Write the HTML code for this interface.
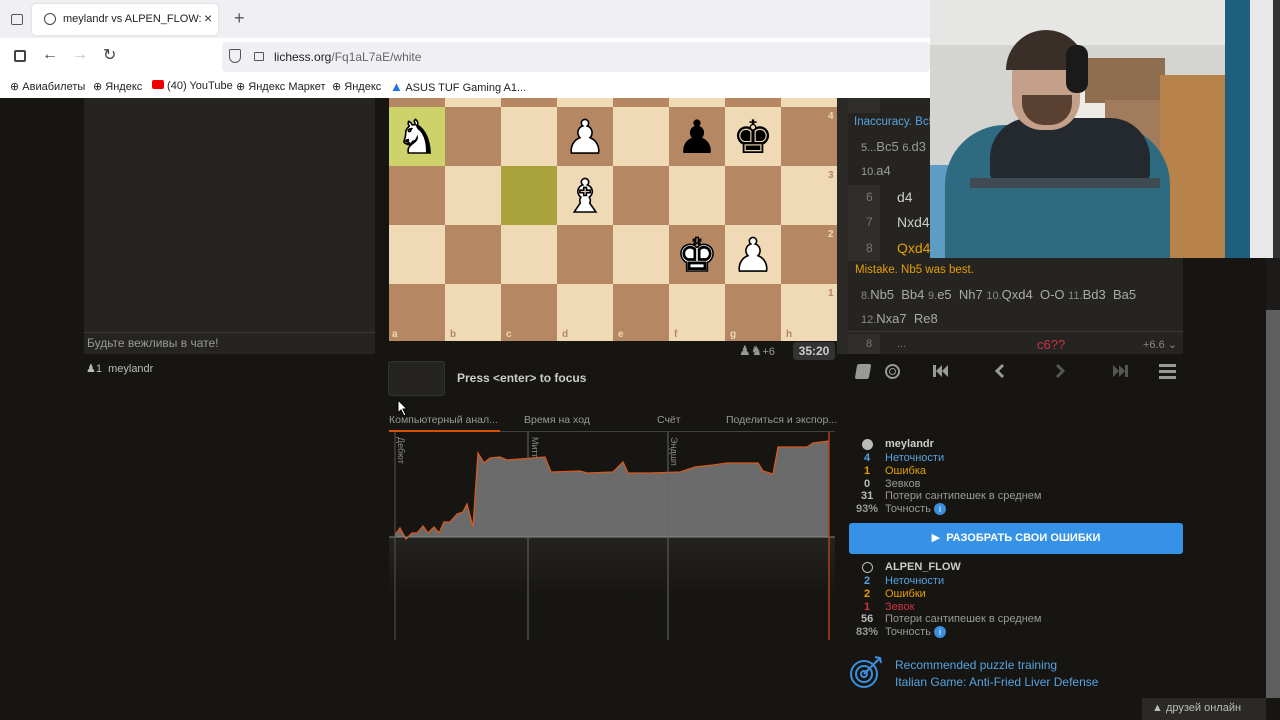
<!DOCTYPE html>
<html><head><meta charset="utf-8">
<style>
*{margin:0;padding:0;box-sizing:border-box}
body{width:1280px;height:720px;overflow:hidden;background:#161512;font-family:"Liberation Sans","DejaVu Sans",sans-serif;position:relative;color:#bababa}
.a{position:absolute;white-space:nowrap}
.mv{font-size:13px}
</style></head><body>
<!-- browser chrome -->
<div class="a" style="left:0;top:0;width:1280px;height:38px;background:#f0f0f4"></div>
<div class="a" style="left:32px;top:4px;width:186px;height:31px;background:#fff;border-radius:4px;box-shadow:0 0 2px #ccc"></div>
<div class="a" style="left:11px;top:14px;width:12px;height:11px;border:1.5px solid #555;border-radius:2px"></div>
<div class="a" style="left:44px;top:13px;width:12px;height:12px;border:1.5px solid #444;border-radius:50%"></div>
<div class="a" style="left:63px;top:13px;width:138px;overflow:hidden;font-size:11px;color:#222">meylandr vs ALPEN_FLOW: Itali</div>
<div class="a" style="left:204px;top:10px;font-size:14px;color:#333">×</div>
<div class="a" style="left:234px;top:8px;font-size:18px;color:#555">+</div>
<div class="a" style="left:0;top:38px;width:1280px;height:37px;background:#fff"></div>
<div class="a" style="left:14px;top:50px;width:12px;height:12px;border:2px solid #444;border-radius:2px"></div>
<div class="a" style="left:42px;top:46px;font-size:16px;color:#444">←</div>
<div class="a" style="left:72px;top:46px;font-size:16px;color:#bbb">→</div>
<div class="a" style="left:103px;top:45px;font-size:16px;color:#444">↻</div>
<div class="a" style="left:222px;top:42px;width:708px;height:30px;background:#f0f0f4;border-radius:4px"></div>
<div class="a" style="left:229px;top:49px;width:12px;height:14px;border:1.5px solid #555;border-radius:2px 2px 7px 7px"></div>
<div class="a" style="left:254px;top:52px;width:10px;height:9px;border:1.5px solid #555;border-radius:1px"></div>
<div class="a" style="left:274px;top:50px;font-size:12px;color:#222">lichess.org<span style="color:#666">/Fq1aL7aE/white</span></div>
<div class="a" style="left:0;top:75px;width:1280px;height:23px;background:#fff;font-size:11px;color:#222">
<span class="a" style="left:10px;top:5px">⊕ Авиабилеты</span>
<span class="a" style="left:93px;top:5px">⊕ Яндекс</span>
<span class="a" style="left:152px;top:5px"><span style="display:inline-block;width:12px;height:9px;background:#e00;border-radius:2px"></span> (40) YouTube</span>
<span class="a" style="left:236px;top:5px">⊕ Яндекс Маркет</span>
<span class="a" style="left:332px;top:5px">⊕ Яндекс</span>
<span class="a" style="left:390px;top:4px"><span style="color:#1a73e8;font-size:13px">▲</span> ASUS TUF Gaming A1...</span>
</div>
<!-- left chat -->
<div class="a" style="left:84px;top:98px;width:291px;height:256px;background:#262421"></div>
<div class="a" style="left:84px;top:332px;width:291px;height:1px;background:#3a3835"></div>
<div class="a" style="left:87px;top:336px;font-size:12px;color:#999">Будьте вежливы в чате!</div>
<div class="a" style="left:86px;top:362px;font-size:11px;color:#bbb">&#9823;1&nbsp; meylandr</div>
<!-- board as SVG -->
<svg class="a" style="left:389px;top:98px" width="448" height="243" font-family="DejaVu Sans">
<g>
<rect x="0" y="0" width="448" height="243" fill="#f0d9b5"/>
<!-- rank5 partial y -50..9 -->
<rect x="0" y="-50" width="56" height="59" fill="#b58863"/><rect x="112" y="-50" width="56" height="59" fill="#b58863"/><rect x="224" y="-50" width="56" height="59" fill="#b58863"/><rect x="336" y="-50" width="56" height="59" fill="#b58863"/>
<!-- rank4 y9 -->
<rect x="0" y="9" width="56" height="59" fill="#cdd26a"/>
<rect x="56" y="9" width="56" height="59" fill="#b58863"/><rect x="168" y="9" width="56" height="59" fill="#b58863"/><rect x="280" y="9" width="56" height="59" fill="#b58863"/><rect x="392" y="9" width="56" height="59" fill="#b58863"/>
<!-- rank3 y68 -->
<rect x="0" y="68" width="56" height="59" fill="#b58863"/><rect x="112" y="68" width="56" height="59" fill="#aaa23a"/><rect x="224" y="68" width="56" height="59" fill="#b58863"/><rect x="336" y="68" width="56" height="59" fill="#b58863"/>
<!-- rank2 y127 -->
<rect x="56" y="127" width="56" height="59" fill="#b58863"/><rect x="168" y="127" width="56" height="59" fill="#b58863"/><rect x="280" y="127" width="56" height="59" fill="#b58863"/><rect x="392" y="127" width="56" height="59" fill="#b58863"/>
<!-- rank1 y186 -->
<rect x="0" y="186" width="56" height="59" fill="#b58863"/><rect x="112" y="186" width="56" height="59" fill="#b58863"/><rect x="224" y="186" width="56" height="59" fill="#b58863"/><rect x="336" y="186" width="56" height="59" fill="#b58863"/>
</g>
<g font-size="46" text-anchor="middle">
<text x="28" y="55" fill="#fff" stroke="#000" stroke-width="1.6">♞</text>
<text x="196" y="55" fill="#fff" stroke="#000" stroke-width="1.6">♟</text>
<text x="308" y="55" fill="#000">♟</text>
<text x="364" y="55" fill="#000">♚</text>
<text x="196" y="114" fill="#fff" stroke="#000" stroke-width="1.6">♝</text>
<text x="308" y="173" fill="#fff" stroke="#000" stroke-width="1.6">♚</text>
<text x="364" y="173" fill="#fff" stroke="#000" stroke-width="1.6">♟</text>
</g>
<g font-size="10" font-weight="bold" font-family="Liberation Sans">
<text x="439" y="21" fill="#f0d9b5">4</text>
<text x="439" y="80" fill="#b58863">3</text>
<text x="439" y="139" fill="#f0d9b5">2</text>
<text x="439" y="198" fill="#b58863">1</text>
<text x="3" y="239" fill="#f0d9b5">a</text>
<text x="61" y="239" fill="#b58863">b</text>
<text x="117" y="239" fill="#f0d9b5">c</text>
<text x="173" y="239" fill="#b58863">d</text>
<text x="229" y="239" fill="#f0d9b5">e</text>
<text x="285" y="239" fill="#b58863">f</text>
<text x="341" y="239" fill="#f0d9b5">g</text>
<text x="397" y="239" fill="#b58863">h</text>
</g>
</svg>
<div class="a" style="left:837px;top:98px;width:12px;height:256px;background:#2b2926"></div>
<div class="a" style="left:739px;top:343px;font-size:13px;color:#999">♟♞<span style="font-size:11px">+6</span></div>
<div class="a" style="left:793px;top:342px;width:42px;height:18px;background:#333;border-radius:3px;color:#ccc;font-size:12px;font-weight:bold;text-align:center;line-height:18px">35:20</div>
<div class="a" style="left:388px;top:361px;width:57px;height:35px;background:#262421;border:1px solid #333;border-radius:3px"></div>
<div class="a" style="left:457px;top:371px;font-size:12px;font-weight:bold;color:#ccc">Press &lt;enter&gt; to focus</div>
<svg class="a" style="left:397px;top:399px" width="12" height="18"><path d="M1 1 L1 14 L4 11 L7 17 L9 16 L6 10 L10 10 Z" fill="#fff" stroke="#000" stroke-width="1"/></svg>
<!-- chart tabs -->
<div class="a" style="left:389px;top:414px;font-size:10.5px;color:#999">Компьютерный анал...</div>
<div class="a" style="left:524px;top:414px;font-size:10.5px;color:#999">Время на ход</div>
<div class="a" style="left:657px;top:414px;font-size:10.5px;color:#999">Счёт</div>
<div class="a" style="left:726px;top:414px;font-size:10.5px;color:#999">Поделиться и экспор...</div>
<div class="a" style="left:389px;top:431px;width:446px;height:1px;background:#404040"></div>
<div class="a" style="left:389px;top:430px;width:111px;height:2px;background:#d85000"></div>
<svg class="a" style="left:0;top:0" width="1280" height="720">
<defs><linearGradient id="g" x1="0" y1="0" x2="0" y2="1"><stop offset="0" stop-color="#252321"/><stop offset="1" stop-color="#161512"/></linearGradient></defs>
<rect x="389" y="537" width="446" height="60" fill="url(#g)"/>
<polygon fill="#6b6b6b" points="395,537 395,535 400,528 406,539 412,533 417,533 423,526 428,533 434,527 439,533 444,522 450,522 457,514 463,512 467,504 473,527 478,453 484,463 490,458 500,457 507,460 545,457 551,472 580,471 587,473 613,472 623,462 628,473 650,473 680,472 695,467 713,465 727,463 758,463 763,471 773,474 778,447 807,447 813,443 829,441 829,537"/>
<polyline fill="none" stroke="#d85a1e" stroke-width="1.3" points="395,535 400,528 406,539 412,533 417,533 423,526 428,533 434,527 439,533 444,522 450,522 457,514 463,512 467,504 473,527 478,453 484,463 490,458 500,457 507,460 545,457 551,472 580,471 587,473 613,472 623,462 628,473 650,473 680,472 695,467 713,465 727,463 758,463 763,471 773,474 778,447 807,447 813,443 829,441"/>
<line x1="389" y1="537" x2="835" y2="537" stroke="#888" stroke-width="1"/>
<line x1="395" y1="432" x2="395" y2="640" stroke="#555"/>
<line x1="528" y1="432" x2="528" y2="640" stroke="#666"/>
<line x1="668" y1="432" x2="668" y2="640" stroke="#666"/>
<line x1="829" y1="432" x2="829" y2="640" stroke="#b04010" stroke-width="1.5"/>
<text x="398" y="437" transform="rotate(90 398 437)" font-size="9" fill="#888" font-family="Liberation Sans">Дебют</text>
<text x="532" y="437" transform="rotate(90 532 437)" font-size="9" fill="#888" font-family="Liberation Sans">Митт</text>
<text x="671" y="437" transform="rotate(90 671 437)" font-size="9" fill="#888" font-family="Liberation Sans">Эндшп</text>
</svg>
<!-- right moves panel -->
<div class="a" style="left:848px;top:98px;width:335px;height:256px;background:#262421"></div>
<div class="a" style="left:848px;top:98px;width:32px;height:15px;background:#302e2b"></div>
<div class="a" style="left:848px;top:185px;width:32px;height:76px;background:#302e2b"></div>
<div class="a" style="left:848px;top:334px;width:32px;height:20px;background:#302e2b"></div>
<div class="a" style="left:854px;top:116px;font-size:11.5px;color:#56a3e0">Inaccuracy. Bc5</div>
<div class="a mv" style="left:861px;top:139px;color:#999"><span style="font-size:11px">5...</span>Bc5 <span style="font-size:11px">6.</span>d3</div>
<div class="a mv" style="left:861px;top:163px;color:#999"><span style="font-size:11px">10.</span>a4</div>
<div class="a" style="left:866px;top:190px;font-size:12px;color:#777">6</div><div class="a" style="left:897px;top:189px;font-size:14px;color:#ccc">d4</div>
<div class="a" style="left:866px;top:215px;font-size:12px;color:#777">7</div><div class="a" style="left:897px;top:214px;font-size:14px;color:#ccc">Nxd4</div>
<div class="a" style="left:866px;top:241px;font-size:12px;color:#777">8</div><div class="a" style="left:897px;top:240px;font-size:14px;color:#e69f00">Qxd4</div>
<div class="a" style="left:855px;top:264px;font-size:11.5px;color:#e69f00">Mistake. Nb5 was best.</div>
<div class="a mv" style="left:861px;top:287px;color:#aaa"><span style="font-size:11px;color:#888">8.</span>Nb5 &nbsp;Bb4 <span style="font-size:11px;color:#888">9.</span>e5 &nbsp;Nh7 <span style="font-size:11px;color:#888">10.</span>Qxd4 &nbsp;O-O <span style="font-size:11px;color:#888">11.</span>Bd3 &nbsp;Ba5</div>
<div class="a mv" style="left:861px;top:311px;color:#aaa"><span style="font-size:11px;color:#888">12.</span>Nxa7 &nbsp;Re8</div>
<div class="a" style="left:848px;top:331px;width:335px;height:1px;background:#3a3835"></div>
<div class="a" style="left:866px;top:338px;font-size:11px;color:#777">8</div>
<div class="a" style="left:897px;top:338px;font-size:11px;color:#777">...</div>
<div class="a" style="left:1037px;top:337px;font-size:13px;color:#cc3344">c6??</div>
<div class="a" style="left:1143px;top:338px;font-size:11px;color:#888">+6.6 ⌄</div>
<!-- controls -->
<div class="a" style="left:856px;top:364px;width:14px;height:15px;background:#999;border-radius:2px;transform:skewX(-10deg)"></div>
<div class="a" style="left:885px;top:364px;width:15px;height:15px;border:2px solid #999;border-radius:50%"><div style="margin:2px;width:7px;height:7px;border:1.5px solid #999;border-radius:50%"></div></div>
<svg class="a" style="left:933px;top:364px" width="16" height="14"><rect x="0" y="1" width="3" height="12" fill="#999"/><path d="M3 7 L9 1 L9 13Z M9 7 L15 1 L15 13Z" fill="#999"/></svg>
<svg class="a" style="left:994px;top:363px" width="12" height="16"><path d="M9 2 L3 8 L9 14" fill="none" stroke="#999" stroke-width="3"/></svg>
<svg class="a" style="left:1054px;top:363px" width="12" height="16"><path d="M3 2 L9 8 L3 14" fill="none" stroke="#555" stroke-width="3"/></svg>
<svg class="a" style="left:1113px;top:364px" width="16" height="14"><path d="M0 1 L6 7 L0 13Z M6 1 L12 7 L6 13Z" fill="#555"/><rect x="12" y="1" width="3" height="12" fill="#555"/></svg>
<svg class="a" style="left:1159px;top:364px" width="17" height="15"><rect y="0" width="17" height="3" fill="#999"/><rect y="6" width="17" height="3" fill="#999"/><rect y="12" width="17" height="3" fill="#999"/></svg>
<!-- stats -->
<div style="position:absolute;left:840px;top:437px;font-size:11px;line-height:12.6px">
<div class="a" style="left:22px;top:2px;width:11px;height:11px;border-radius:50%;background:#bbb"></div>
<div class="a" style="left:45px;top:1px;font-weight:bold;color:#ccc">meylandr</div>
<div class="a" style="left:24px;top:15px;color:#56a3e0;font-weight:bold">4</div><div class="a" style="left:45px;top:15px;color:#56a3e0">Неточности</div>
<div class="a" style="left:24px;top:28px;color:#e69f00;font-weight:bold">1</div><div class="a" style="left:45px;top:28px;color:#e69f00">Ошибка</div>
<div class="a" style="left:24px;top:41px;color:#bbb;font-weight:bold">0</div><div class="a" style="left:45px;top:41px;color:#999">Зевков</div>
<div class="a" style="left:21px;top:53px;color:#bbb;font-weight:bold">31</div><div class="a" style="left:45px;top:53px;color:#999">Потери сантипешек в среднем</div>
<div class="a" style="left:16px;top:66px;color:#999;font-weight:bold">93%</div><div class="a" style="left:45px;top:66px;color:#999">Точность <span style="display:inline-block;width:12px;height:12px;border-radius:50%;background:#3b8ede;color:#fff;font-size:9px;text-align:center;line-height:12px;vertical-align:middle">i</span></div>
</div>
<div class="a" style="left:849px;top:523px;width:334px;height:31px;background:#3692e7;border-radius:3px;color:#fff;font-size:11px;font-weight:bold;text-align:center;line-height:31px">▶&nbsp; РАЗОБРАТЬ СВОИ ОШИБКИ</div>
<div style="position:absolute;left:840px;top:560px;font-size:11px;line-height:12.6px">
<div class="a" style="left:22px;top:2px;width:11px;height:11px;border-radius:50%;border:1.5px solid #bbb"></div>
<div class="a" style="left:45px;top:1px;font-weight:bold;color:#ccc">ALPEN_FLOW</div>
<div class="a" style="left:24px;top:15px;color:#56a3e0;font-weight:bold">2</div><div class="a" style="left:45px;top:15px;color:#56a3e0">Неточности</div>
<div class="a" style="left:24px;top:28px;color:#e69f00;font-weight:bold">2</div><div class="a" style="left:45px;top:28px;color:#e69f00">Ошибки</div>
<div class="a" style="left:24px;top:41px;color:#cc3344;font-weight:bold">1</div><div class="a" style="left:45px;top:41px;color:#cc3344">Зевок</div>
<div class="a" style="left:21px;top:53px;color:#bbb;font-weight:bold">56</div><div class="a" style="left:45px;top:53px;color:#999">Потери сантипешек в среднем</div>
<div class="a" style="left:16px;top:66px;color:#999;font-weight:bold">83%</div><div class="a" style="left:45px;top:66px;color:#999">Точность <span style="display:inline-block;width:12px;height:12px;border-radius:50%;background:#3b8ede;color:#fff;font-size:9px;text-align:center;line-height:12px;vertical-align:middle">i</span></div>
</div>
<svg class="a" style="left:849px;top:655px" width="34" height="34"><g fill="none" stroke="#3b8ede" stroke-width="2"><circle cx="15" cy="19" r="13"/><circle cx="15" cy="19" r="8"/><circle cx="15" cy="19" r="3"/><line x1="15" y1="19" x2="30" y2="4"/><path d="M26 2 L31 3 L32 8"/></g></svg>
<div class="a" style="left:895px;top:657px;font-size:12px;color:#56a3e0;line-height:17px">Recommended puzzle training<br>Italian Game: Anti-Fried Liver Defense</div>
<div class="a" style="left:1142px;top:698px;width:124px;height:22px;background:#2b2926;font-size:11px;color:#bbb;padding:4px 0 0 10px">▲ друзей онлайн</div>
<div class="a" style="left:1266px;top:310px;width:14px;height:388px;background:#5e5e5e"></div>
<div class="a" style="left:1266px;top:98px;width:14px;height:212px;background:#1c1b19"></div>
<!-- webcam -->
<div class="a" style="left:930px;top:0;width:350px;height:258px;overflow:hidden;background:#d4d4d0">
<div class="a" style="left:0;top:0;width:350px;height:45px;background:#e6e6e4"></div>
<div class="a" style="left:145px;top:85px;width:45px;height:130px;background:#ecebe6"></div>
<div class="a" style="left:155px;top:58px;width:80px;height:45px;background:#8f6d4f"></div>
<div class="a" style="left:175px;top:100px;width:60px;height:158px;background:#a07c5c"></div>
<div class="a" style="left:230px;top:75px;width:65px;height:183px;background:#b7834a"></div>
<div class="a" style="left:295px;top:0;width:25px;height:258px;background:#1e5f80"></div>
<div class="a" style="left:320px;top:0;width:23px;height:258px;background:#e8e8ea"></div>
<div class="a" style="left:343px;top:0;width:7px;height:258px;background:#333"></div>
<div class="a" style="left:0;top:165px;width:40px;height:93px;background:#5d9dc4"></div>
<div class="a" style="left:15px;top:125px;width:225px;height:140px;border-radius:60px 60px 0 0;background:#2e6b80"></div>
<div class="a" style="left:60px;top:118px;width:160px;height:65px;border-radius:40px 40px 10px 10px;background:#23292e"></div>
<div class="a" style="left:40px;top:178px;width:190px;height:10px;background:#3f4a52"></div>
<div class="a" style="left:82px;top:42px;width:68px;height:88px;border-radius:34px 34px 30px 30px;background:#c4a08a"></div>
<div class="a" style="left:76px;top:30px;width:80px;height:40px;border-radius:40px 40px 0 0;background:#3a2e28"></div>
<div class="a" style="left:136px;top:45px;width:22px;height:48px;border-radius:10px;background:#1a1a1a"></div>
<div class="a" style="left:92px;top:95px;width:50px;height:30px;border-radius:0 0 22px 22px;background:#5a4030"></div>
</div>
</body></html>
